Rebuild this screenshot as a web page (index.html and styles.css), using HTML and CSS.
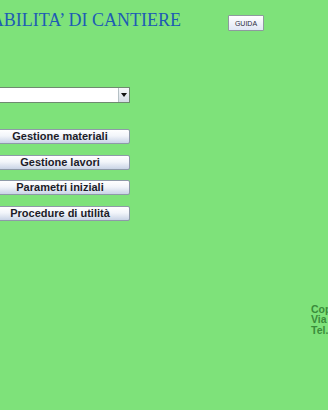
FILE: index.html
```html
<!DOCTYPE html>
<html lang="it">
<head>
<meta charset="utf-8">
<title>Contabilità di cantiere</title>
<link rel="stylesheet" href="styles.css">
</head>
<body>
<div class="page">
  <div class="header">
    <div class="title-box"><h1 class="title">CONTABILITA’ DI CANTIERE</h1></div>
    <button class="guida">GUIDA</button>
  </div>
  <div class="select">
    <span class="select-value"></span>
    <span class="select-arrow"></span>
  </div>
  <div class="menu">
    <button class="menu-btn">Gestione materiali</button>
    <button class="menu-btn">Gestione lavori</button>
    <button class="menu-btn">Parametri iniziali</button>
    <button class="menu-btn">Procedure di utilità</button>
  </div>
  <div class="footer">
    <div>Copyright</div>
    <div>Via</div>
    <div>Tel.</div>
  </div>
</div>
</body>
</html>
```

FILE: styles.css
```css
html, body {
  margin: 0;
  padding: 0;
  background: #7ee27a;
  overflow: hidden;
  width: 328px;
  height: 410px;
}
.page {
  width: 328px;
  font-family: "Liberation Sans", Arial, sans-serif;
}
.header {
  display: flex;
  align-items: flex-start;
}
.title-box {
  width: 181px;
  flex: 0 0 181px;
  display: flex;
  justify-content: flex-end;
}
.title {
  margin: 11px 0 0 0;
  font-family: "Liberation Serif", "Times New Roman", serif;
  font-weight: normal;
  font-size: 18px;
  line-height: 18px;
  color: #1d5cb4;
  white-space: nowrap;
  flex: 0 0 auto;
}
.guida {
  margin: 15px 0 0 47px;
  width: 36px;
  height: 16px;
  padding: 0;
  font-family: "Liberation Sans", Arial, sans-serif;
  font-size: 7px;
  color: #2a2a3a;
  background: linear-gradient(#ffffff, #dfe6f4);
  border: 1px solid #8e9a9e;
  border-radius: 1px;
}
.select {
  margin: 56px 0 0 -10px;
  width: 140px;
  height: 16px;
  box-sizing: border-box;
  display: flex;
  background: #ffffff;
  border: 1px solid #6f8a70;
}
.select-value {
  flex: 1;
}
.select-arrow {
  width: 10px;
  background: linear-gradient(#f6f8fa, #d5dde6);
  border-left: 1px solid #b5c0c5;
  display: flex;
  align-items: center;
  justify-content: center;
}
.select-arrow::after {
  content: "";
  border-left: 3px solid transparent;
  border-right: 3px solid transparent;
  border-top: 4px solid #111;
}
.menu {
  margin: 26px 0 0 -10px;
  display: flex;
  flex-direction: column;
  gap: 10.5px;
}
.menu-btn {
  width: 140px;
  height: 15px;
  padding: 0;
  font-family: "Liberation Sans", Arial, sans-serif;
  font-weight: bold;
  font-size: 11px;
  line-height: 13px;
  color: #1c1c28;
  background: linear-gradient(#ffffff 0%, #f2f5fa 45%, #c9d4e6 100%);
  border: 1px solid #8e9aa8;
  border-radius: 2px;
}
.footer {
  margin: 83px 0 0 311px;
  font-weight: bold;
  font-size: 10.5px;
  line-height: 10.5px;
  color: #3a8c3a;
  white-space: nowrap;
}
```
